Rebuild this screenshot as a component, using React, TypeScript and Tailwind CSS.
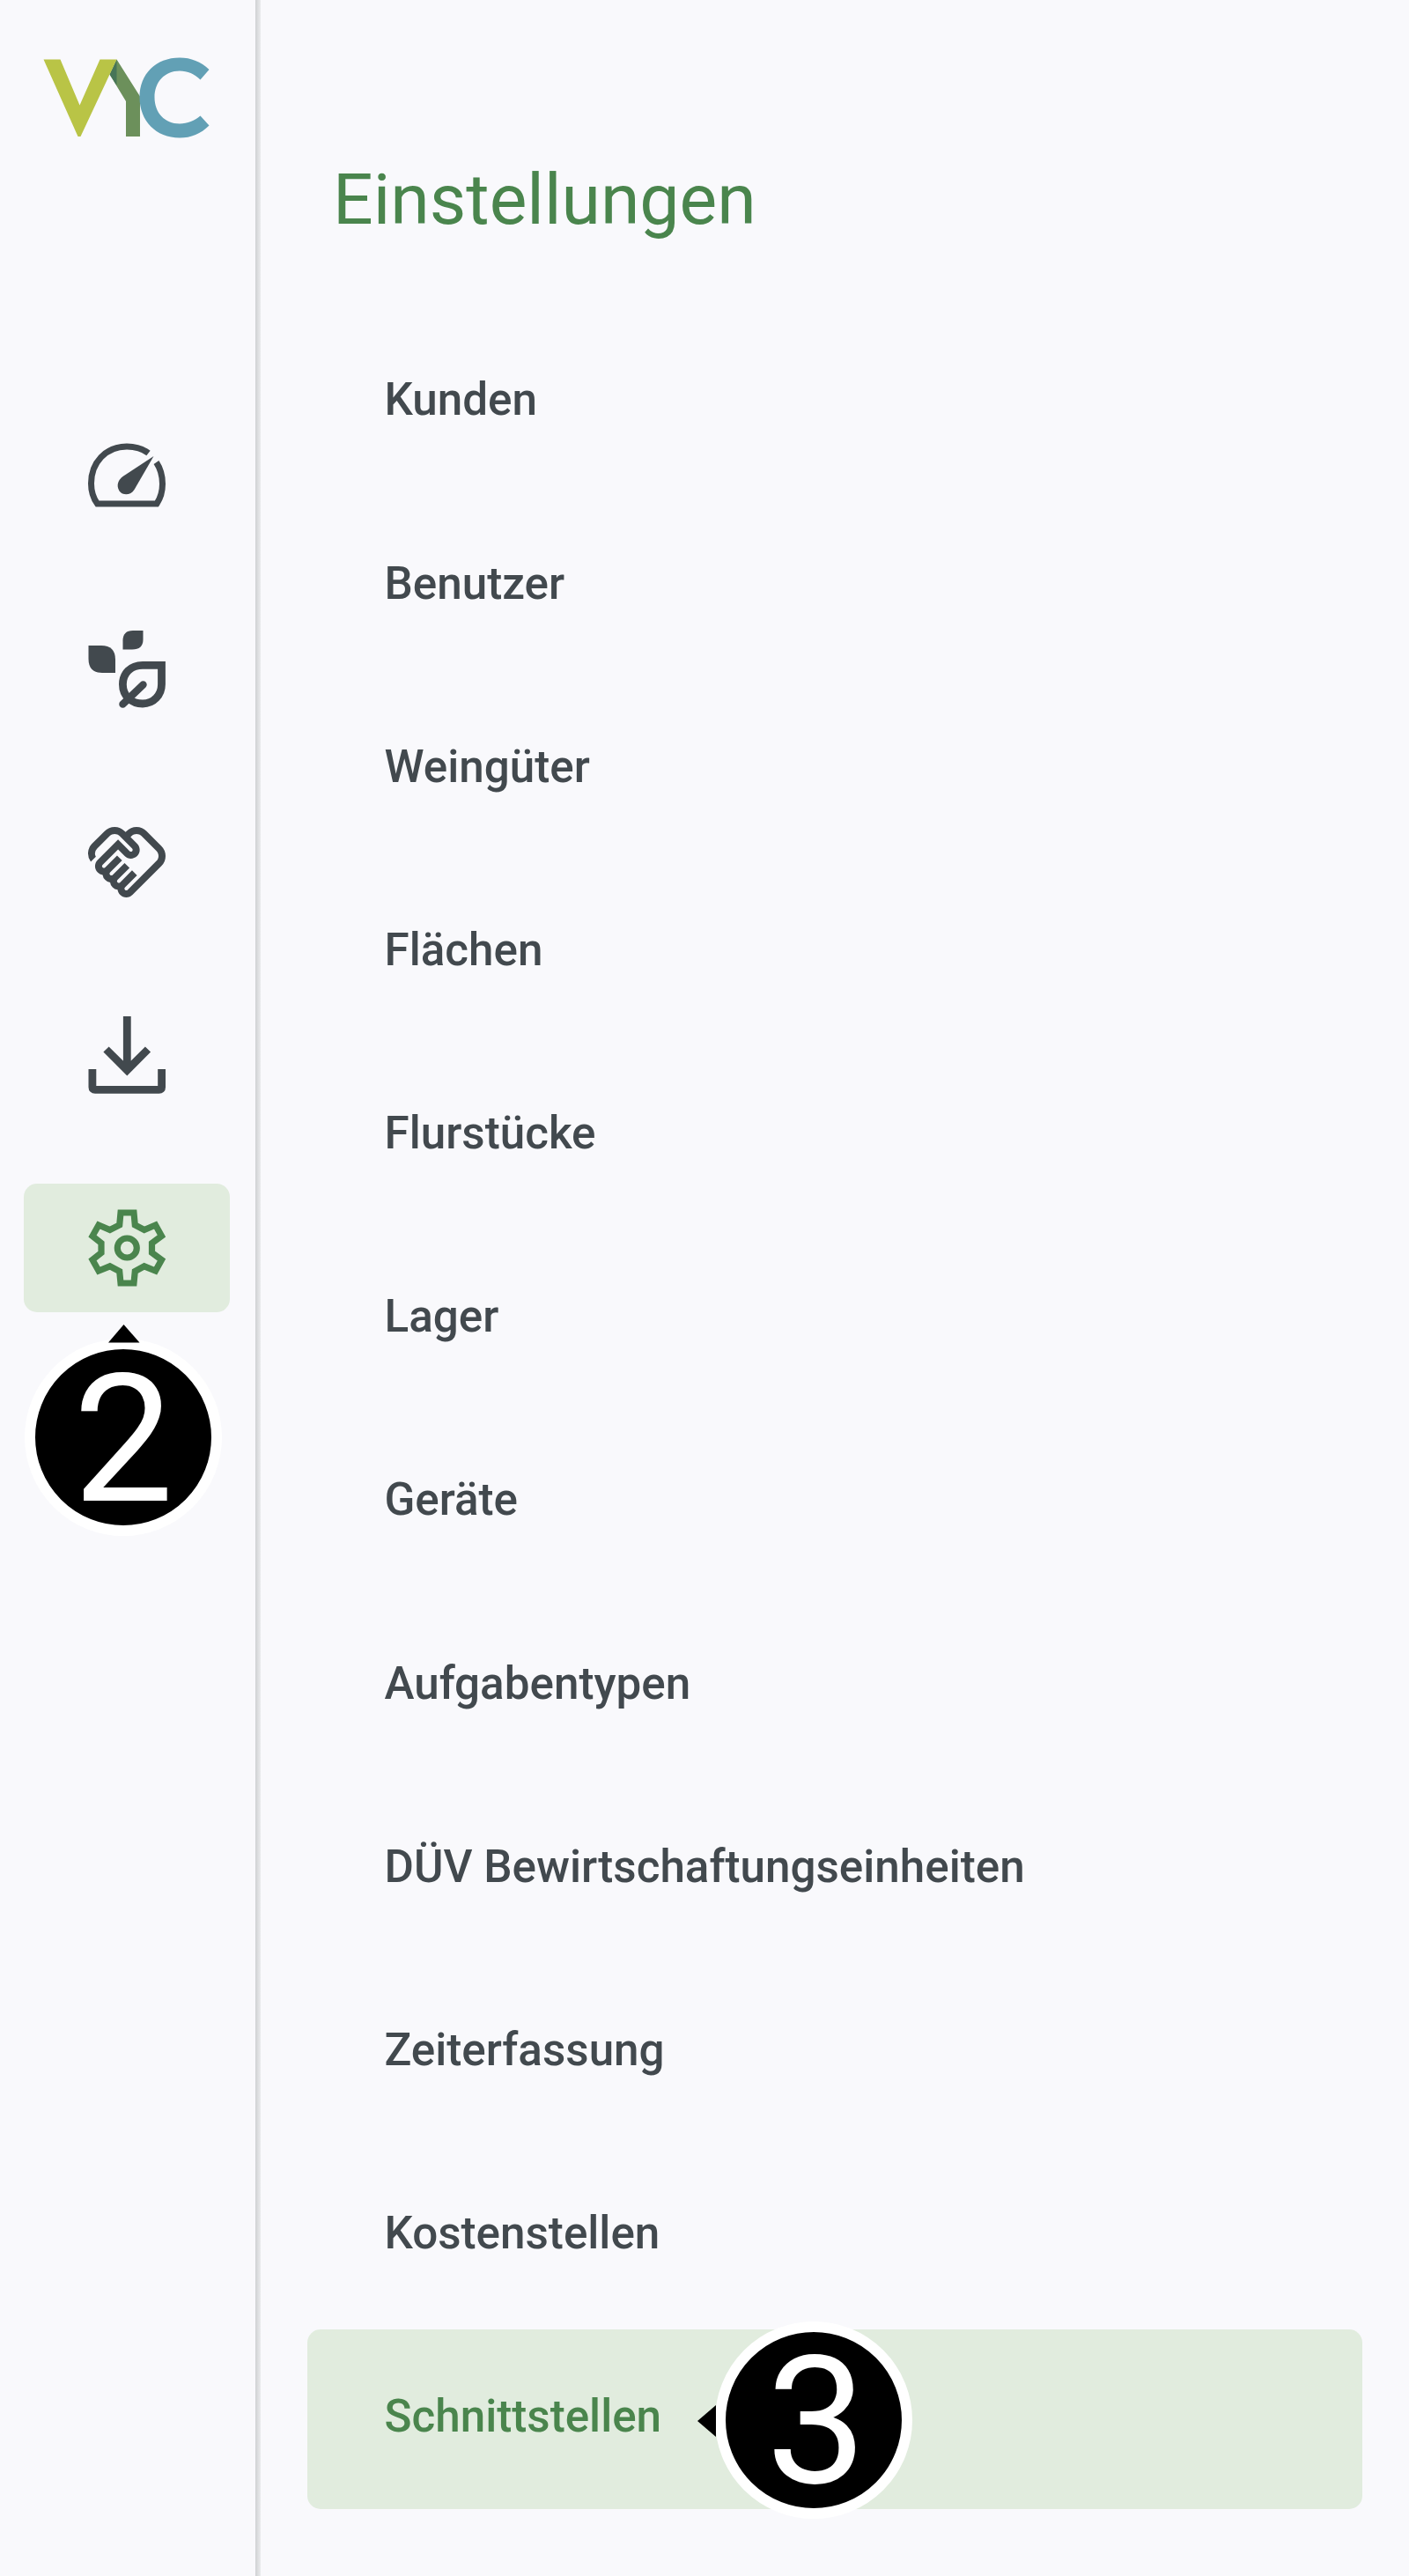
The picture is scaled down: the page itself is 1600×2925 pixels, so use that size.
import type { ReactNode } from "react";
import { MdOutlineHandshake } from "react-icons/md";

const items = [
  "Kunden",
  "Benutzer",
  "Weingüter",
  "Flächen",
  "Flurstücke",
  "Lager",
  "Geräte",
  "Aufgabentypen",
  "DÜV Bewirtschaftungseinheiten",
  "Zeiterfassung",
  "Kostenstellen",
  "Schnittstellen",
];

function Logo() {
  return (
    <svg className="ml-[49px] mt-[65px] block h-[92px] w-[190px]" viewBox="0 0 190 92">
      <path fill="#6c905b" d="M83.5 2.5 110 44.5V90H94V50L75.5 19.5Z" />
      <path fill="#477558" d="M83.5 2.5V32L75.5 19.5Z" />
      <path fill="#b9c446" d="M.5 2.5H19.5L41.5 54.5 64.5 2.5H83.5L42.5 90H39.5Z" />
      <path
        fill="#62a0b5"
        d="M188.5 14 178.5 25.5C172 19 164 15.500 155 15.500C138 15.500 126.500 28 126.500 45.500C126.500 63 138 75.500 155 75.500C164 75.500 172 72 178.500 66.500L188.500 77.500C179 87 168 91.500 155 91.500C128 91.500 109.500 72 109.500 45.500C109.500 19 128 .5 155 .5C168 .5 179 5 188.500 14Z"
      />
    </svg>
  );
}

function Gauge() {
  return (
    <svg className="h-24 w-24" viewBox="0 0 96 96" fill="none">
      <path
        stroke="currentColor"
        strokeWidth="7"
        d="M72.500 21.500C66 16.500 57.500 14 48 14C24 14 7.500 32.500 7.500 56C7.500 65 9.800 72.500 14.500 79H82C86 73 88.500 65 88.500 56.500C88.500 48 86.500 39.500 81.500 32"
      />
      <path fill="currentColor" d="M78.500 25 56.500 63C53 69 44 70.500 39.500 64.500C35.500 58 38.500 51.500 43.500 48Z" />
    </svg>
  );
}

function Leaves() {
  return (
    <svg className="h-24 w-24" viewBox="0 0 96 96" fill="none">
      <path fill="currentColor" d="M4.500 21H19Q35 21 35 37V52H20Q4.500 52 4.500 36Z" />
      <path fill="currentColor" d="M66.500 4V14Q66.500 25.500 54 25.500H43.500V15.500Q43.500 4 55 4Z" />
      <path stroke="currentColor" strokeWidth="8.800" d="M87.500 43.400H66C52 43.400 43.400 53 43.400 65C43.400 78 53 87 66 87C78.500 87 87.500 77 87.500 65Z" />
      <path stroke="currentColor" strokeWidth="8.500" strokeLinecap="round" d="M66.500 65.500 43.500 87.500" />
    </svg>
  );
}

function Download() {
  return (
    <svg className="h-24 w-24" viewBox="0 0 96 96" fill="none" stroke="currentColor" strokeWidth="8.800">
      <path d="M48.300 4V66M24.500 41.500 48.300 65.200 72 41.500" />
      <path d="M8.900 64V84.400Q8.900 87.400 12 87.400H84.600Q87.600 87.400 87.600 84.400V64" />
    </svg>
  );
}

function Gear() {
  return (
    <svg className="h-24 w-24" viewBox="0 0 96 96" fill="none" stroke="currentColor" strokeWidth="7.200">
      <path d="M41 8H56L57.300 22 67.800 27.500 80.600 22 87.500 34.500 76.500 42.500V53.500L87.500 61.500 80.600 74 67.800 68.800 57.300 74.500 56 88H41L39.700 74.500 28.800 68.800 16 74 9 61.500 19 53.500V42.500L9 34.500 16 22 28.800 27.500 39.700 22Z" />
      <circle cx="48.300" cy="48" r="11" />
    </svg>
  );
}

function NavItem({ active, children }: { active?: boolean; children: ReactNode }) {
  return (
    <button
      className={
        active
          ? "flex h-[146px] w-[234px] items-center justify-center rounded-[15px] bg-[#e1ecde] text-[#4a854d]"
          : "flex h-[146px] w-[234px] items-center justify-center rounded-[15px] text-[#42494e]"
      }
    >
      {children}
    </button>
  );
}

function Badge({ children }: { children: ReactNode }) {
  return (
    <span className="flex size-[224px] items-center justify-center rounded-full border-[12px] border-white bg-black text-[203px] font-normal leading-none text-white">
      {children}
    </span>
  );
}

export default function App() {
  return (
    <div className="flex h-[2925px] w-[1600px] overflow-hidden bg-[#f9f9fc] font-[Roboto,sans-serif]">
      <aside className="relative w-[290px] shrink-0">
        <Logo />
        <nav className="ml-[27px] mt-[311px] flex flex-col gap-[73px]">
          <NavItem><Gauge /></NavItem>
          <NavItem><Leaves /></NavItem>
          <NavItem><MdOutlineHandshake className="size-24" /></NavItem>
          <NavItem><Download /></NavItem>
          <NavItem active><Gear /></NavItem>
        </nav>
        <div className="absolute left-[28px] top-[1520px]">
          <Badge><span className="translate-y-[3px]">2</span></Badge>
          <svg className="absolute left-[95px] top-[-16px] h-[21px] w-[36px]" viewBox="0 0 36 21">
            <path d="M17.500 0 35.500 20.500H0Z" />
          </svg>
        </div>
      </aside>
      <div className="w-[6px] shrink-0 bg-linear-to-r from-[#cfd1d3] to-[#ebecee]" />
      <main className="ml-[53px] w-[1198px]">
        <h1 className="ml-[29px] mt-[179px] text-[80.500px] font-normal leading-[96px] text-[#4a854d]">Einstellungen</h1>
        <ul className="mt-[79.500px] flex flex-col gap-[3.700px]">
          {items.map((item) => (
            <li
              key={item}
              className={
                item === "Schnittstellen"
                  ? "relative flex h-[204.500px] items-center rounded-[15px] bg-[#e1ecde] pl-[87.500px] text-[51.200px] font-medium text-[#4a854d]"
                  : "flex h-[204.500px] items-center pl-[87.500px] text-[51.200px] font-medium text-[#42494e]"
              }
            >
              <span className="-translate-y-[2px]">{item}</span>
              {item === "Schnittstellen" && (
                <div className="absolute left-[463px] top-[-9px]">
                  <Badge><span className="translate-x-[3px] translate-y-[3px]">3</span></Badge>
                  <svg className="absolute left-[-20px] top-[95px] h-[36px] w-[21px]" viewBox="0 0 21 36">
                    <path d="M0 18 21 0V36Z" />
                  </svg>
                </div>
              )}
            </li>
          ))}
        </ul>
      </main>
    </div>
  );
}
